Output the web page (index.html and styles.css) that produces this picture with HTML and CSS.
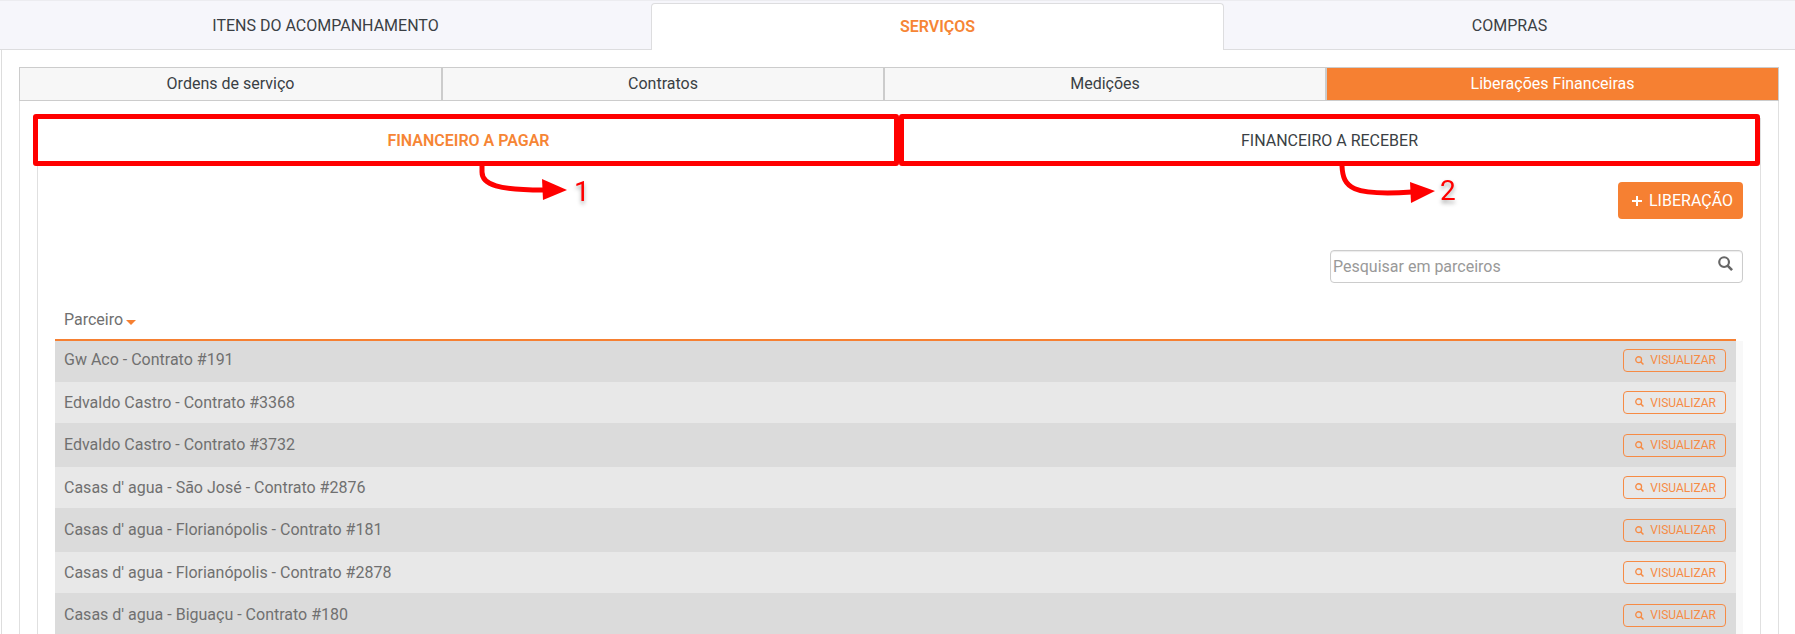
FILE: index.html
```
<!DOCTYPE html>
<html lang="pt-BR">
<head>
    <meta charset="UTF-8">
    <meta name="viewport" content="width=device-width, initial-scale=1.0">
    <title>Liberações Financeiras</title>
    <link rel="stylesheet" href="styles.css">
</head>
<body>
    <svg width="0" height="0" class="sprite" aria-hidden="true">
        <symbol id="icon-search" viewBox="0 0 16 16">
            <circle cx="6.5" cy="6.5" r="5.2" fill="none" stroke="currentColor" stroke-width="2.3"/>
            <path d="M10.2 10.2 L15 15" fill="none" stroke="currentColor" stroke-width="2.8"/>
        </symbol>
    </svg>

    <nav class="main-tabs">
        <a href="#itens" class="main-tab">ITENS DO ACOMPANHAMENTO</a>
        <a href="#servicos" class="main-tab active">SERVIÇOS</a>
        <a href="#compras" class="main-tab">COMPRAS</a>
    </nav>

    <main class="main-content">
        <nav class="sub-tabs">
            <a href="#ordens" class="sub-tab">Ordens de serviço</a>
            <a href="#contratos" class="sub-tab">Contratos</a>
            <a href="#medicoes" class="sub-tab">Medições</a>
            <a href="#liberacoes" class="sub-tab active">Liberações Financeiras</a>
        </nav>

        <section class="sub-content">
            <div class="finance">
                <nav class="finance-tabs">
                    <div class="finance-item">
                        <a href="#pagar" class="finance-tab active">FINANCEIRO A PAGAR</a>
                        <svg class="callout" width="130" height="60" viewBox="0 0 130 60">
                            <path d="M13 3 V10 C13 23 30 28 74 28" fill="none" stroke="#f00" stroke-width="5"/>
                            <path d="M73 17 L98 28 L74 38 Z" fill="#f00"/>
                            <text x="105" y="39">1</text>
                        </svg>
                    </div>
                    <div class="finance-item">
                        <a href="#receber" class="finance-tab">FINANCEIRO A RECEBER</a>
                        <svg class="callout" width="130" height="60" viewBox="0 0 130 60">
                            <path d="M12 4 C13 26 22 34 82 30" fill="none" stroke="#f00" stroke-width="5"/>
                            <path d="M80 20 L105 29 L81 41 Z" fill="#f00"/>
                            <text x="110" y="38">2</text>
                        </svg>
                    </div>
                </nav>

                <div class="finance-body">
                    <div class="actions">
                        <button type="button" class="btn-add">
                            <svg width="10" height="10" viewBox="0 0 10 10"><path d="M5 0 V10 M0 5 H10" stroke="currentColor" stroke-width="2"/></svg>
                            LIBERAÇÃO
                        </button>
                    </div>

                    <div class="search">
                        <input type="text" placeholder="Pesquisar em parceiros" aria-label="Pesquisar em parceiros">
                        <svg class="search-icon" width="15" height="15"><use href="#icon-search"/></svg>
                    </div>

                    <div class="table-wrapper">
                        <table class="partners">
                            <thead>
                                <tr>
                                    <th>Parceiro<span class="caret"></span></th>
                                    <th></th>
                                </tr>
                            </thead>
                            <tbody>
                                <tr>
                                    <td>Gw Aco - Contrato #191</td>
                                    <td><button type="button" class="btn-view"><svg width="9" height="9"><use href="#icon-search"/></svg>VISUALIZAR</button></td>
                                </tr>
                                <tr>
                                    <td>Edvaldo Castro - Contrato #3368</td>
                                    <td><button type="button" class="btn-view"><svg width="9" height="9"><use href="#icon-search"/></svg>VISUALIZAR</button></td>
                                </tr>
                                <tr>
                                    <td>Edvaldo Castro - Contrato #3732</td>
                                    <td><button type="button" class="btn-view"><svg width="9" height="9"><use href="#icon-search"/></svg>VISUALIZAR</button></td>
                                </tr>
                                <tr>
                                    <td>Casas d' agua - São José - Contrato #2876</td>
                                    <td><button type="button" class="btn-view"><svg width="9" height="9"><use href="#icon-search"/></svg>VISUALIZAR</button></td>
                                </tr>
                                <tr>
                                    <td>Casas d' agua - Florianópolis - Contrato #181</td>
                                    <td><button type="button" class="btn-view"><svg width="9" height="9"><use href="#icon-search"/></svg>VISUALIZAR</button></td>
                                </tr>
                                <tr>
                                    <td>Casas d' agua - Florianópolis - Contrato #2878</td>
                                    <td><button type="button" class="btn-view"><svg width="9" height="9"><use href="#icon-search"/></svg>VISUALIZAR</button></td>
                                </tr>
                                <tr>
                                    <td>Casas d' agua - Biguaçu - Contrato #180</td>
                                    <td><button type="button" class="btn-view"><svg width="9" height="9"><use href="#icon-search"/></svg>VISUALIZAR</button></td>
                                </tr>
                            </tbody>
                        </table>
                    </div>
                </div>
            </div>
        </section>
    </main>
</body>
</html>
```

FILE: styles.css
```
* {
    margin: 0;
    padding: 0;
    box-sizing: border-box;
}

body {
    height: 100vh;
    overflow: hidden;
    background-color: #fff;
    color: #3a3f44;
    font-family: Roboto, 'Liberation Sans', sans-serif;
    font-size: 16px;
    line-height: 20px;
}

a {
    color: inherit;
    text-decoration: none;
}

button,
input {
    font-family: inherit;
}

.sprite {
    position: absolute;
}

/* Main tabs */
.main-tabs {
    display: grid;
    grid-template-columns: 651fr 573fr 571fr;
    height: 50px;
    padding-top: 2px;
    border-top: 1px solid #ececf0;
    background-color: #f6f6fb;
}

.main-tab {
    display: flex;
    align-items: center;
    justify-content: center;
    border-bottom: 1px solid #dddddf;
}

.main-tab.active {
    border: 1px solid #dddddf;
    border-bottom: none;
    border-radius: 4px 4px 0 0;
    background-color: #fff;
    color: #f68535;
    font-weight: 600;
}

.main-content {
    margin-left: 1px;
    padding: 17px 16px 0 17px;
    border-left: 1px solid #ddd;
}

/* Sub tabs */
.sub-tabs {
    display: grid;
    grid-template-columns: 423fr 442fr 442fr 451fr;
    border: 1px solid #ccc;
}

.sub-tab {
    height: 32px;
    padding: 6px 0;
    border-right: 2px solid #ccc;
    background-color: #f7f7f7;
    text-align: center;
}

.sub-tab.active {
    border-right: none;
    background-color: #f68032;
    color: #fff;
}

.sub-content {
    padding: 17px 17px 0;
    border: 1px solid #e0e0e0;
    border-top: none;
}

.finance {
    border: 1px solid #e0e0e0;
    border-top: none;
}

/* Finance tabs */
.finance-tabs {
    display: flex;
}

.finance-item {
    position: relative;
    flex: 1;
}

.finance-tab {
    display: block;
    padding: 13px 0 11px;
    text-align: center;
}

.finance-tab.active {
    color: #f68535;
    font-weight: 600;
}

.finance-item::after {
    content: '';
    position: absolute;
    inset: -4px 0;
    border: 5px solid #f00;
    border-radius: 3px;
    pointer-events: none;
}

.finance-item:first-child::after {
    left: -5px;
}

.callout {
    position: absolute;
    top: 100%;
    left: 50%;
    pointer-events: none;
}

.callout text {
    fill: #f00;
    font-size: 28px;
    filter: drop-shadow(0 3px 2px rgba(0, 0, 0, 0.35));
}

.finance-body {
    padding: 20px 17px 0;
}

.actions,
.search {
    display: flex;
    justify-content: flex-end;
}

.btn-add {
    display: flex;
    align-items: center;
    gap: 7px;
    height: 37px;
    padding: 0 10px 0 14px;
    border: none;
    border-radius: 4px;
    background-color: #f68032;
    color: #fff;
    font-size: 16px;
    cursor: pointer;
}

.search {
    position: relative;
    margin-top: 31px;
}

.search input {
    width: 413px;
    height: 33px;
    padding: 0 32px 0 2px;
    border: 1px solid #ccc;
    border-radius: 4px;
    box-shadow: inset 0 1px 1px rgba(0, 0, 0, 0.08);
    color: #555;
    font-size: 16px;
}

.search input::placeholder {
    color: #999;
}

.search-icon {
    position: absolute;
    top: 6px;
    right: 10px;
    color: #666;
}

/* Partners table */
.table-wrapper {
    margin-top: 17px;
    padding-right: 7px;
    background: linear-gradient(#f8f8f8, #f8f8f8) right 41px / 7px 100% no-repeat;
}

.partners {
    width: 100%;
    border-collapse: separate;
    border-spacing: 0;
    color: #707070;
}

.partners th {
    height: 41px;
    padding: 0 9px;
    border-bottom: 2px solid #f68032;
    font-weight: normal;
    text-align: left;
}

.partners td {
    height: 41px;
    padding: 0 9px;
    background-color: #e8e8e8;
}

.partners tr:nth-child(odd) td {
    height: 44px;
    background-color: #dbdbdb;
}

.partners tbody tr:first-child td {
    height: 41px;
    padding-bottom: 3px;
}

.partners td:last-child {
    padding-right: 10px;
    text-align: right;
}

.caret {
    display: inline-block;
    margin-left: 3px;
    border: 5px solid transparent;
    border-top-color: #f68032;
    border-bottom: none;
}

.btn-view {
    display: inline-flex;
    align-items: center;
    gap: 6px;
    height: 23px;
    padding: 0 9px 0 11px;
    border: 1px solid #f68b45;
    border-radius: 4px;
    background: none;
    color: #f68b45;
    font-size: 12px;
    vertical-align: middle;
    cursor: pointer;
}
```
